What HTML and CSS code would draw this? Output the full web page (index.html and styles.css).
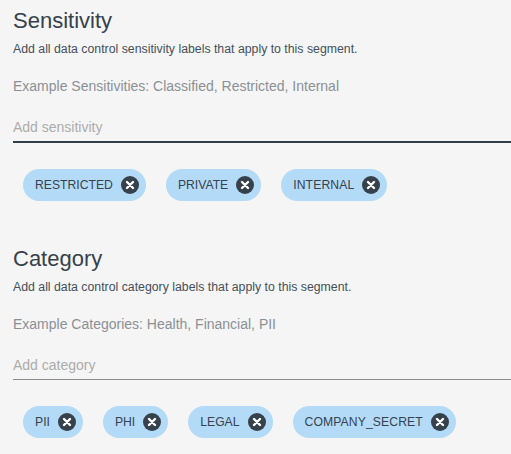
FILE: index.html
```html
<!DOCTYPE html>
<html>
<head>
<meta charset="utf-8">
<link rel="stylesheet" href="styles.css">
</head>
<body>
<div class="page">
  <section class="section">
    <h2 class="title">Sensitivity</h2>
    <p class="desc">Add all data control sensitivity labels that apply to this segment.</p>
    <p class="example">Example Sensitivities: Classified, Restricted, Internal</p>
    <div class="field field-active"><span class="placeholder">Add sensitivity</span></div>
    <div class="chips">
      <span class="chip">RESTRICTED<span class="x"><svg viewBox="0 0 18 18"><path d="M6 6L12 12M12 6L6 12"/></svg></span></span>
      <span class="chip">PRIVATE<span class="x"><svg viewBox="0 0 18 18"><path d="M6 6L12 12M12 6L6 12"/></svg></span></span>
      <span class="chip">INTERNAL<span class="x"><svg viewBox="0 0 18 18"><path d="M6 6L12 12M12 6L6 12"/></svg></span></span>
    </div>
  </section>
  <section class="section">
    <h2 class="title">Category</h2>
    <p class="desc">Add all data control category labels that apply to this segment.</p>
    <p class="example">Example Categories: Health, Financial, PII</p>
    <div class="field"><span class="placeholder">Add category</span></div>
    <div class="chips">
      <span class="chip">PII<span class="x"><svg viewBox="0 0 18 18"><path d="M6 6L12 12M12 6L6 12"/></svg></span></span>
      <span class="chip">PHI<span class="x"><svg viewBox="0 0 18 18"><path d="M6 6L12 12M12 6L6 12"/></svg></span></span>
      <span class="chip">LEGAL<span class="x"><svg viewBox="0 0 18 18"><path d="M6 6L12 12M12 6L6 12"/></svg></span></span>
      <span class="chip">COMPANY_SECRET<span class="x"><svg viewBox="0 0 18 18"><path d="M6 6L12 12M12 6L6 12"/></svg></span></span>
    </div>
  </section>
</div>
</body>
</html>
```
FILE: styles.css
```css
html, body {
  margin: 0;
  padding: 0;
  background: #f5f5f5;
}
body {
  font-family: "Liberation Sans", Arial, sans-serif;
  color: #37424d;
}
.page {
  display: flex;
  flex-direction: column;
  gap: 45px;
  padding: 8px 0 0 13px;
}
.title {
  margin: 0;
  font-size: 22px;
  font-weight: normal;
  line-height: 26px;
  color: #36414c;
}
.desc {
  margin: 6px 0 0;
  font-size: 12.3px;
  line-height: 18px;
  color: #45505a;
}
.example {
  margin: 19px 0 0;
  font-size: 14px;
  line-height: 18px;
  color: #8b9096;
}
.field {
  margin-top: 23px;
  padding-bottom: 5px;
  border-bottom: 1px solid #8c8c8c;
}
.field-active {
  border-bottom: 2px solid #333d47;
}
.placeholder {
  display: block;
  font-size: 14px;
  line-height: 18px;
  color: #acacac;
}
.chips {
  display: flex;
  gap: 20px;
  margin-top: 26px;
  padding-left: 10px;
}
.chip {
  display: inline-flex;
  align-items: center;
  height: 32px;
  padding: 0 7px 0 12px;
  border-radius: 16px;
  background: #b3dbf8;
  font-size: 12.2px;
  color: #37424d;
  gap: 8px;
}
.chip:last-child {
  letter-spacing: 0.1px;
}
.x {
  width: 18px;
  height: 18px;
  border-radius: 50%;
  background: #36414c;
  display: inline-flex;
}
.x svg {
  width: 18px;
  height: 18px;
}
.x path {
  stroke: #ffffff;
  stroke-width: 2.4;
  stroke-linecap: round;
  fill: none;
}
```
